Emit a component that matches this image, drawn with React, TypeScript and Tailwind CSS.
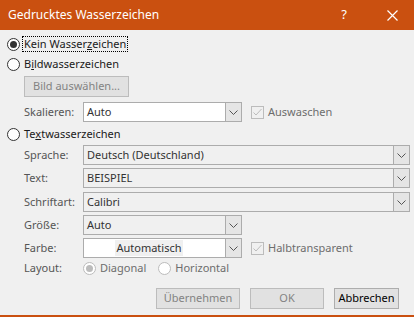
import React from "react";

const font = { fontFamily: '"Noto Sans", "Liberation Sans", sans-serif' };

function Radio({ checked = false, disabled = false }: { checked?: boolean; disabled?: boolean }) {
  return (
    <span
      className={
        "flex h-[13px] w-[13px] shrink-0 items-center justify-center rounded-full border bg-white " +
        (disabled ? "border-[#bcbcbc]" : "border-[#333333]")
      }
    >
      {checked && (
        <span className={"h-[7px] w-[7px] rounded-full " + (disabled ? "bg-[#bcbcbc]" : "bg-[#333333]")} />
      )}
    </span>
  );
}

function Check() {
  return (
    <span className="flex h-[13px] w-[13px] shrink-0 items-center justify-center border border-[#bcbcbc] bg-[#f0f0f0]">
      <svg width="11" height="11" viewBox="0 0 11 11" fill="none">
        <path d="M1.5 5.5 L4 8 L9.5 2" stroke="#bcbcbc" strokeWidth="1" />
      </svg>
    </span>
  );
}

function Select({
  value,
  width,
  white = false,
  center = false,
}: {
  value: string;
  width: string;
  white?: boolean;
  center?: boolean;
}) {
  return (
    <div
      className={
        "flex h-5 items-stretch border border-[#acacac] " + width + " " + (white ? "bg-white" : "bg-[#f0f0f0]")
      }
    >
      <div
        className={
          "flex flex-1 items-center px-[3px] text-[#333333] " + (center ? "justify-center pr-[14px]" : "")
        }
      >
        {center ? <span className="bg-[#f0f0f0] px-[1px]">{value}</span> : value}
      </div>
      <div className="flex w-4 items-center justify-center border-l border-[#acacac] bg-[#e5e5e5]">
        <svg width="9" height="5" viewBox="0 0 9 5" fill="none">
          <path d="M0.5 0.5 L4.5 4.5 L8.5 0.5" stroke="#555555" strokeWidth="1" />
        </svg>
      </div>
    </div>
  );
}

function Row({ label, children, className = "" }: { label: string; children: React.ReactNode; className?: string }) {
  return (
    <div className={"flex items-center pl-[24px] " + className}>
      <span className="w-[59px] text-[#555555]">{label}</span>
      {children}
    </div>
  );
}

export default function App() {
  return (
    <div className="flex h-[317px] w-[414px] flex-col bg-[#f0f0f0]" style={font}>
      <div className="flex h-[30px] shrink-0 items-center bg-[#ca5010] pl-2 text-[12px] text-white">
        <span className="flex-1">Gedrucktes Wasserzeichen</span>
        <span className="mr-[40px] text-[13px]">?</span>
        <svg className="mr-[16px]" width="11" height="11" viewBox="0 0 11 11" fill="none">
          <path d="M0.5 0.5 L10.5 10.5 M10.5 0.5 L0.5 10.5" stroke="white" strokeWidth="1.2" />
        </svg>
      </div>

      <div className="flex flex-1 flex-col text-[11px] text-[#1a1a1a]">
        <div className="mt-[6px] flex h-4 items-center pl-[7px]">
          <Radio checked />
          <span className="ml-[2px] border border-dotted border-black px-[1px] leading-[14px]">
            Kein Wasser<span className="underline">z</span>eichen
          </span>
        </div>

        <div className="mt-1 flex h-4 items-center pl-[7px]">
          <Radio />
          <span className="ml-[4px]">
            B<span className="underline">i</span>ldwasserzeichen
          </span>
        </div>

        <div className="mt-1 pl-[24px]">
          <div className="flex h-[21px] w-[105px] items-center justify-center border border-[#bcbcbc] bg-[#e1e1e1] text-[#838383]">
            Bild auswählen...
          </div>
        </div>

        <Row label="Skalieren:" className="mt-[5px]">
          <Select value="Auto" width="w-[159px]" white />
          <span className="ml-[9px] flex items-center">
            <Check />
            <span className="ml-[4px] text-[#6d6d6d]">Auswaschen</span>
          </span>
        </Row>

        <div className="mt-[4px] flex h-4 items-center pl-[7px]">
          <Radio />
          <span className="ml-[4px]">
            Te<span className="underline">x</span>twasserzeichen
          </span>
        </div>

        <Row label="Sprache:" className="mt-[3px]">
          <Select value="Deutsch (Deutschland)" width="w-[327px]" />
        </Row>
        <Row label="Text:" className="mt-[3px]">
          <Select value="BEISPIEL" width="w-[327px]" />
        </Row>
        <Row label="Schriftart:" className="mt-[4px]">
          <Select value="Calibri" width="w-[327px]" />
        </Row>
        <Row label="Größe:" className="mt-[3px]">
          <Select value="Auto" width="w-[159px]" />
        </Row>
        <Row label="Farbe:" className="mt-[3px]">
          <Select value="Automatisch" width="w-[159px]" white center />
          <span className="ml-[9px] flex items-center">
            <Check />
            <span className="ml-[4px] text-[#6d6d6d]">Halbtransparent</span>
          </span>
        </Row>
        <Row label="Layout:" className="mt-[2px] h-4">
          <Radio checked disabled />
          <span className="ml-[4px] text-[#6d6d6d]">Diagonal</span>
          <span className="ml-[12px]">
            <Radio disabled />
          </span>
          <span className="ml-[4px] text-[#6d6d6d]">Horizontal</span>
        </Row>

        <div className="mt-[12px] flex justify-end gap-[10px] pr-[15px]">
          <div className="flex h-[21px] w-[84px] items-center justify-center border border-[#bcbcbc] bg-[#e1e1e1] text-[#838383]">
            Übernehmen
          </div>
          <div className="flex h-[21px] w-[74px] items-center justify-center border border-[#bcbcbc] bg-[#e1e1e1] text-[#838383]">
            OK
          </div>
          <div className="flex h-[21px] w-[65px] items-center justify-center border border-[#adadad] bg-[#e1e1e1] text-black">
            Abbrechen
          </div>
        </div>
      </div>
      <div className="h-[2px] shrink-0 bg-[#ca5010]" />
    </div>
  );
}
